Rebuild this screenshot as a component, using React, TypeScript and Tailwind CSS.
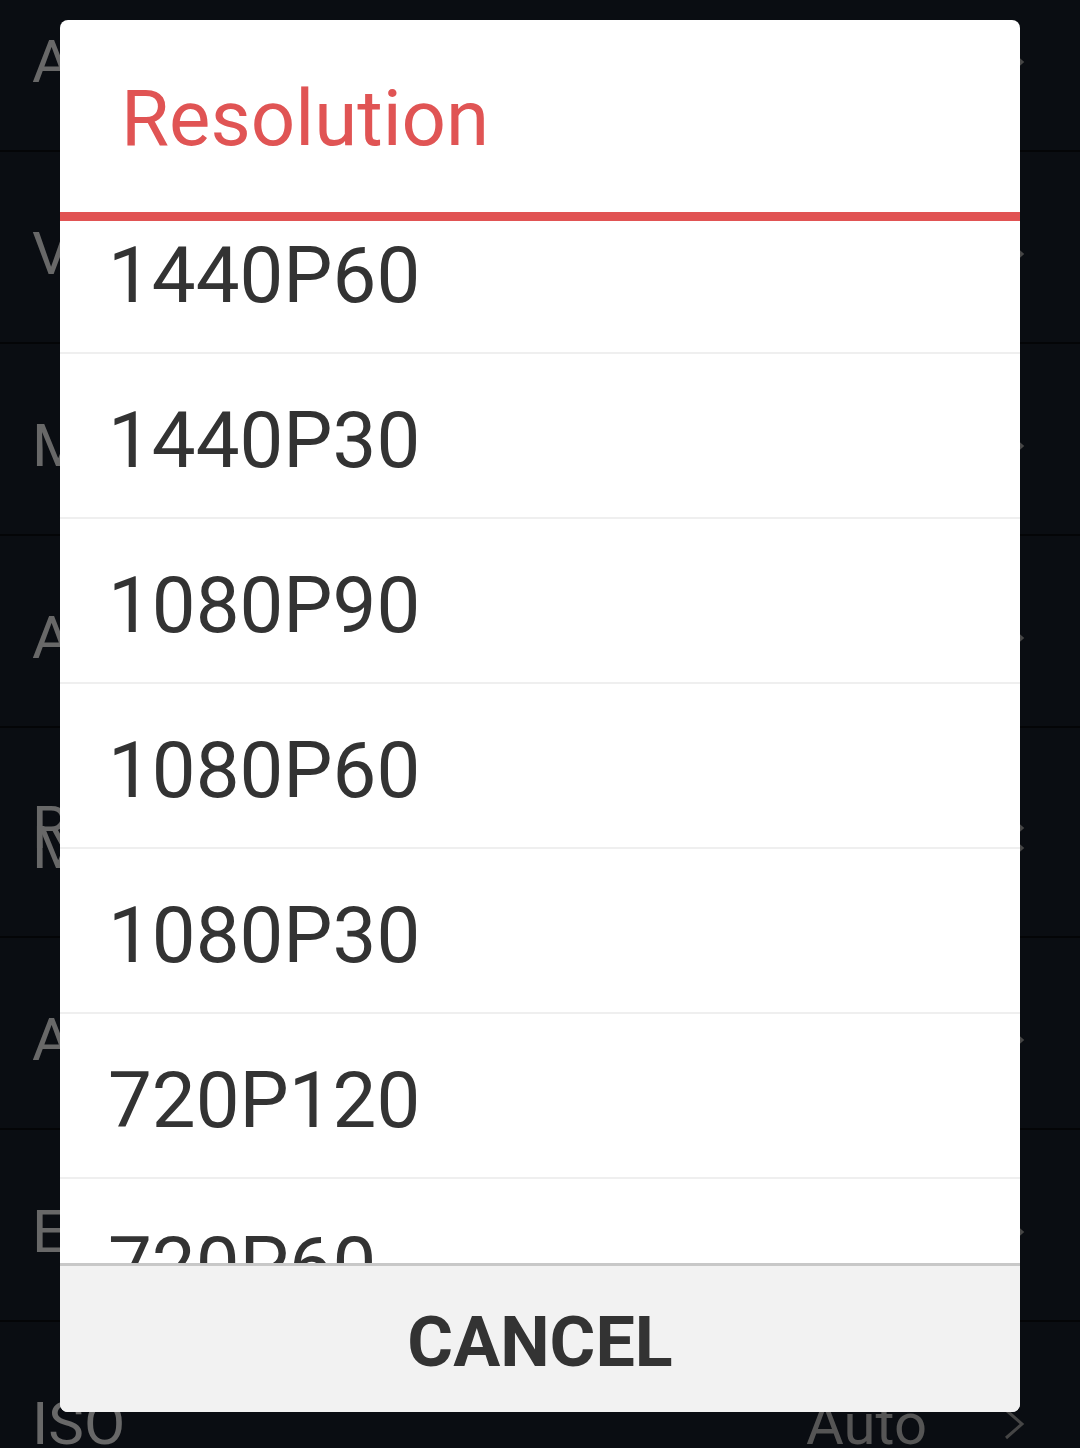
import React from "react"

const ROWS = [
  { label: "A", h: "h-[192px]" },
  { label: "V", h: "h-[192px]" },
  { label: "M", h: "h-[192px]" },
  { label: "A", h: "h-[192px]" },
  { label: "R|M", h: "h-[210px]" },
  { label: "A", h: "h-[192px]" },
  { label: "E", h: "h-[192px]" },
  { label: "ISO", h: "h-[192px]", value: "Auto" },
]

const OPTIONS = ["1440P60", "1440P30", "1080P90", "1080P60", "1080P30", "720P120", "720P60", "720P30"]

function Chevron() {
  return (
    <svg width="22" height="32" viewBox="0 0 22 32" className="shrink-0">
      <polyline points="3,2 19,16 3,30" fill="none" stroke="#454545" strokeWidth="3" />
    </svg>
  )
}

function RowContent({ label, value }: { label: string; value?: string }) {
  return (
    <>
      <span className="text-[60px] text-[#686868]">{label}</span>
      <div className="flex items-center gap-[76px]">
        {value && <span className="text-[58px] text-[#555]">{value}</span>}
        <Chevron />
      </div>
    </>
  )
}

export default function App() {
  return (
    <div className="relative h-[1448px] w-[1080px] overflow-hidden bg-[#0a0d12] font-['Roboto',sans-serif]">
      {/* Settings list behind the dialog */}
      <div className="-mt-[40px] flex flex-col">
        {ROWS.map((row, i) =>
          row.label.includes("|") ? (
            <div key={i} className={`${row.h} flex flex-col justify-center border-b-2 border-[#040507] pl-[32px] pr-[55px] pt-[12px]`}>
              {row.label.split("|").map(l => (
                <div key={l} className="flex h-[20px] items-center justify-between leading-[20px]">
                  <RowContent label={l} />
                </div>
              ))}
            </div>
          ) : (
            <div key={i} className={`${row.h} flex shrink-0 items-center justify-between border-b-2 border-[#040507] pl-[32px] pr-[55px] pt-[14px] leading-none`}>
              <RowContent label={row.label} value={row.value} />
            </div>
          )
        )}
      </div>

      {/* Dialog */}
      <div className="absolute left-[60px] top-[20px] flex h-[1392px] w-[960px] flex-col overflow-hidden rounded-[8px] bg-white">
        <div className="flex h-[192px] shrink-0 items-center pl-[61px] pt-[6px]">
          <h2 className="text-[78px] leading-none text-[#e05454]">Resolution</h2>
        </div>
        <div className="h-[9px] shrink-0 bg-[#e15353]" />
        <div className="flex-1 overflow-hidden">
          <div className="-mt-[32px]">
            {OPTIONS.map(o => (
              <div key={o} className="flex h-[165px] items-center border-b-2 border-[#efefef] pl-[48px] pt-[10px]">
                <span className="text-[78px] leading-none text-[#333]">{o}</span>
              </div>
            ))}
          </div>
        </div>
        <div className="flex h-[149px] shrink-0 items-center justify-center border-t-[3px] border-[#c8c8c8] bg-[#f2f2f2] pt-[6px]">
          <span className="text-[70px] font-bold leading-none text-[#333]">CANCEL</span>
        </div>
      </div>
    </div>
  )
}
